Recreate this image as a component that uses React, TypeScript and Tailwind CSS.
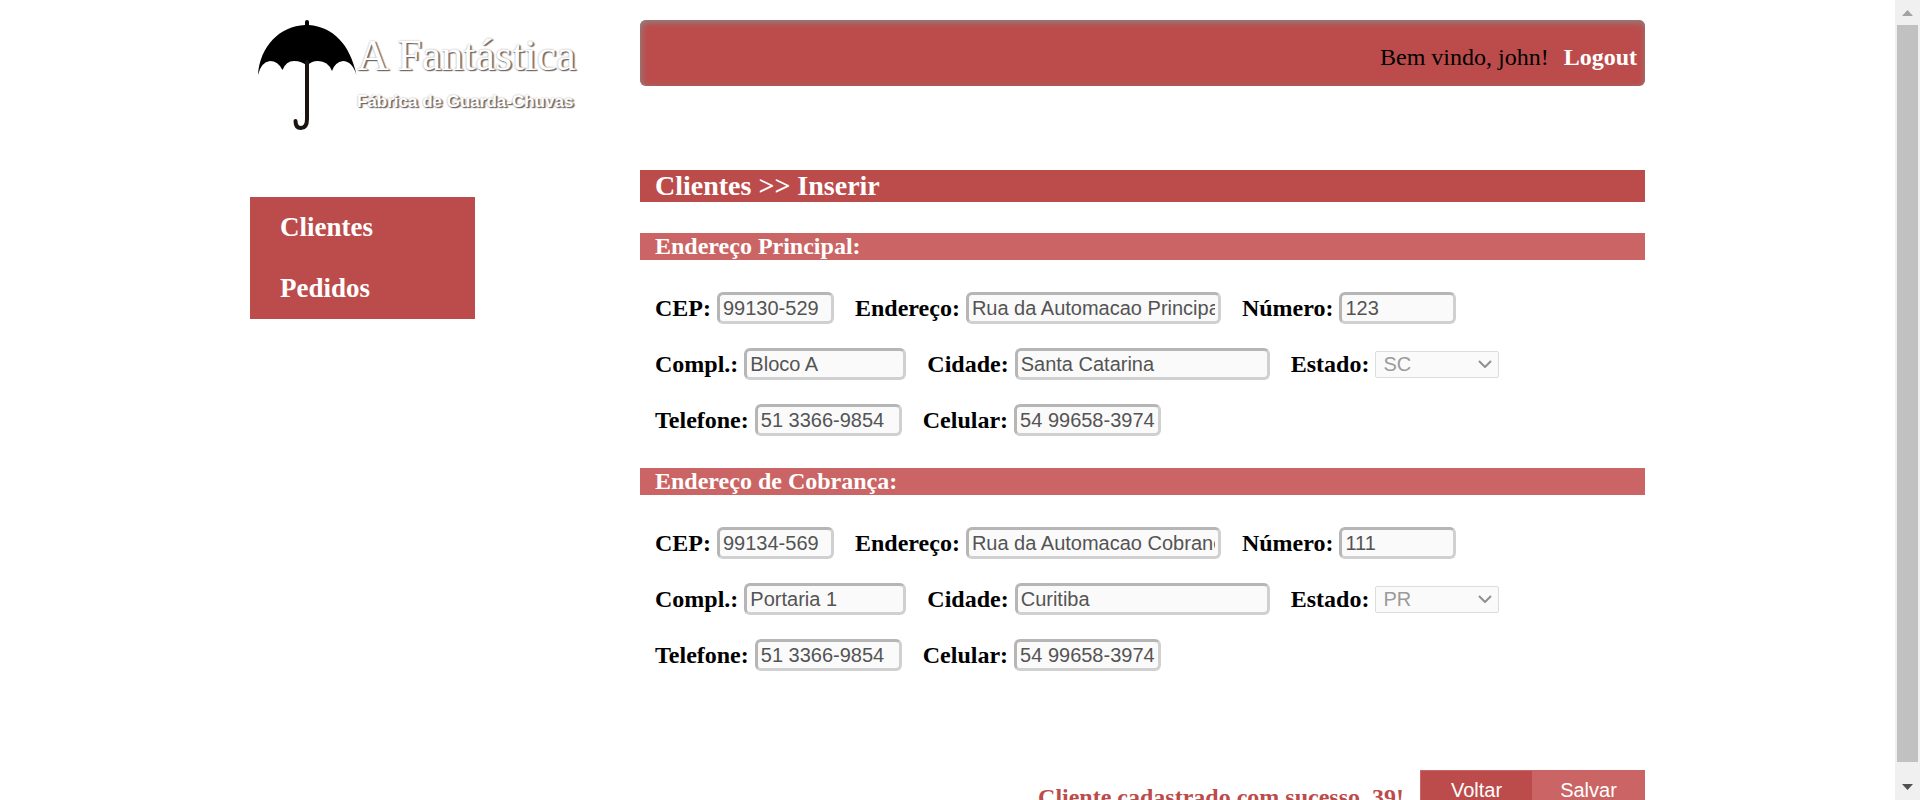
import React from "react";

type FieldData = {
  id: string;
  label: string;
  value: string;
  width: string;
  kind?: "select";
};

const serif = "font-['Liberation_Serif',serif]";
const sans = "font-['Liberation_Sans',sans-serif]";

function address(
  prefix: string,
  cep: string,
  street: string,
  number: string,
  extra: string,
  city: string,
  state: string,
): FieldData[][] {
  return [
    [
      { id: `${prefix}-cep`, label: "CEP:", value: cep, width: "w-[117px]" },
      { id: `${prefix}-endereco`, label: "Endereço:", value: street, width: "w-[255px]" },
      { id: `${prefix}-numero`, label: "Número:", value: number, width: "w-[117px]" },
    ],
    [
      { id: `${prefix}-compl`, label: "Compl.:", value: extra, width: "w-[162px]" },
      { id: `${prefix}-cidade`, label: "Cidade:", value: city, width: "w-[255px]" },
      { id: `${prefix}-estado`, label: "Estado:", value: state, width: "w-[124px]", kind: "select" },
    ],
    [
      { id: `${prefix}-telefone`, label: "Telefone:", value: "51 3366-9854", width: "w-[147px]" },
      { id: `${prefix}-celular`, label: "Celular:", value: "54 99658-3974", width: "w-[147px]" },
    ],
  ];
}

const principal = address(
  "principal",
  "99130-529",
  "Rua da Automacao Principal",
  "123",
  "Bloco A",
  "Santa Catarina",
  "SC",
);
const cobranca = address(
  "cobranca",
  "99134-569",
  "Rua da Automacao Cobranca",
  "111",
  "Portaria 1",
  "Curitiba",
  "PR",
);

function Field({ field }: { field: FieldData }) {
  return (
    <div className="flex items-center gap-1.5">
      <label htmlFor={field.id} className="text-[24px] leading-[27px] font-bold">
        {field.label}
      </label>
      {field.kind === "select" ? (
        <div className={`relative ${field.width}`}>
          <select
            id={field.id}
            disabled
            defaultValue={field.value}
            className={`${sans} block h-[27px] w-full appearance-none rounded-[2px] border border-[#dcdcdc] bg-[#fafafa] pl-[7px] text-[20px] leading-[25px] text-[#9b9b9b] opacity-100`}
          >
            <option>{field.value}</option>
          </select>
          <svg
            viewBox="0 0 14 8"
            className="pointer-events-none absolute top-[9px] right-[7px] h-2 w-3.5"
            fill="none"
            stroke="#8f8f8f"
            strokeWidth="2"
          >
            <path d="M1 1 L7 7 L13 1" />
          </svg>
        </div>
      ) : (
        <input
          id={field.id}
          type="text"
          disabled
          defaultValue={field.value}
          className={`${sans} ${field.width} h-8 rounded-[6px] border-[3px] border-t-[#b6b6b6] border-r-[#d0d0d0] border-b-[#d0d0d0] border-l-[#b6b6b6] bg-[#fafafa] px-[3px] text-[20px] leading-[24px] text-[#545454]`}
        />
      )}
    </div>
  );
}

function AddressSection({ title, rows }: { title: string; rows: FieldData[][] }) {
  return (
    <section>
      <h2 className="bg-[#cb6464] pl-[15px] text-[24px] leading-[27px] font-bold text-white">{title}</h2>
      <div className="flex flex-col gap-6 py-8 pl-[15px]">
        {rows.map((row) => (
          <div key={row[0].id} className="flex flex-wrap items-center gap-x-[21px] gap-y-6">
            {row.map((field) => (
              <Field key={field.id} field={field} />
            ))}
          </div>
        ))}
      </div>
    </section>
  );
}

function Logo() {
  return (
    <a href="#inicio" className="flex h-[150px] pl-[7px]">
      <svg viewBox="0 0 100 114" className="mt-[18px] h-[114px] w-[100px] shrink-0">
        <path
          d="M48 7 V4 Q48 2 50 2 Q52 2 52 4 V7 C76 9 93 26 99.500 57 Q95 43 86 43 Q78 44 75 53 Q71 43 61 43 Q54 43 50 48 Q45 43 37 43 Q29 43 25.500 52 Q21 43 13 43 Q4 44 1 57 C3 28 23 8 48 7 Z"
          fill="#000"
        />
        <path
          d="M50 44 V101 Q50 110 44 110 Q38.500 110 38.500 103"
          fill="none"
          stroke="#1b1212"
          strokeWidth="4"
          strokeLinecap="round"
        />
      </svg>
      <span className="flex flex-col whitespace-nowrap text-white [text-shadow:1px_1px_1px_#6f6664,2px_1px_1px_#8f8886,0px_0px_2px_#a8a2a0]">
        <span className={`${serif} pt-7 text-[44px] leading-[56px]`}>A Fantástica</span>
        <span className="font-['Liberation_Sans_Narrow','Liberation_Sans',sans-serif] text-[17px] leading-[36px] font-bold">
          Fábrica de Guarda-Chuvas
        </span>
      </span>
    </a>
  );
}

function ScrollBar() {
  return (
    <div aria-hidden="true" className="flex w-[25px] shrink-0 flex-col items-center bg-[#f0f0f0]">
      <svg viewBox="0 0 25 25" className="size-[25px] shrink-0">
        <path d="M7 16 L12.500 10 L18 16 Z" fill="#a3a3a3" />
      </svg>
      <div className="w-[21px] flex-1 bg-[#c1c1c1]" />
      <svg viewBox="0 0 25 38" className="h-[38px] w-[25px] shrink-0">
        <path d="M7 22 L12.500 28 L18 22 Z" fill="#505050" />
      </svg>
    </div>
  );
}

export default function App() {
  return (
    <div className={`${serif} flex h-screen bg-white text-black`}>
      <div className="min-w-0 flex-1 overflow-y-auto [scrollbar-width:none]">
        <div className="mx-auto flex max-w-[1395px] gap-[165px]">
          <aside className="w-[225px] shrink-0">
            <Logo />
            <nav className="mt-[47px] bg-[#bc4c4b] text-[27px] font-bold text-white">
              <a href="#clientes" className="block pl-[30px] leading-[61px]">
                Clientes
              </a>
              <a href="#pedidos" className="block pl-[30px] leading-[61px]">
                Pedidos
              </a>
            </nav>
          </aside>

          <main className="min-w-0 flex-1 pt-5">
            <header className="flex h-[66px] items-center justify-end gap-[15px] rounded-[6px] bg-[#bc4c4b] pt-2 pr-2 text-[24px] leading-[27px] shadow-[inset_1px_2px_7px_#888888]">
              <span>Bem vindo, john!</span>
              <a href="#logout" className="font-bold text-white">
                Logout
              </a>
            </header>

            <h1 className="mt-[84px] mb-[31px] bg-[#bc4c4b] pl-[15px] text-[28px] leading-[32px] font-bold text-white">
              Clientes &gt;&gt; Inserir
            </h1>

            <form onSubmit={(event) => event.preventDefault()}>
              <AddressSection title="Endereço Principal:" rows={principal} />
              <AddressSection title="Endereço de Cobrança:" rows={cobranca} />

              <div className="mt-[67px] mb-8 flex items-end justify-end gap-4">
                <p role="status" className="text-[24px] leading-[27px] font-bold text-[#bc4c4b]">
                  Cliente cadastrado com sucesso. 39!
                </p>
                <div className={`${sans} flex text-[20px] leading-[39px] text-white`}>
                  <button type="button" className="w-28 border border-r-0 border-[#cb6464] bg-[#bc4c4b]">
                    Voltar
                  </button>
                  <button type="submit" className="w-[113px] border border-[#cb6464] bg-[#cb6464]">
                    Salvar
                  </button>
                </div>
              </div>
            </form>
          </main>
        </div>
      </div>
      <ScrollBar />
    </div>
  );
}
